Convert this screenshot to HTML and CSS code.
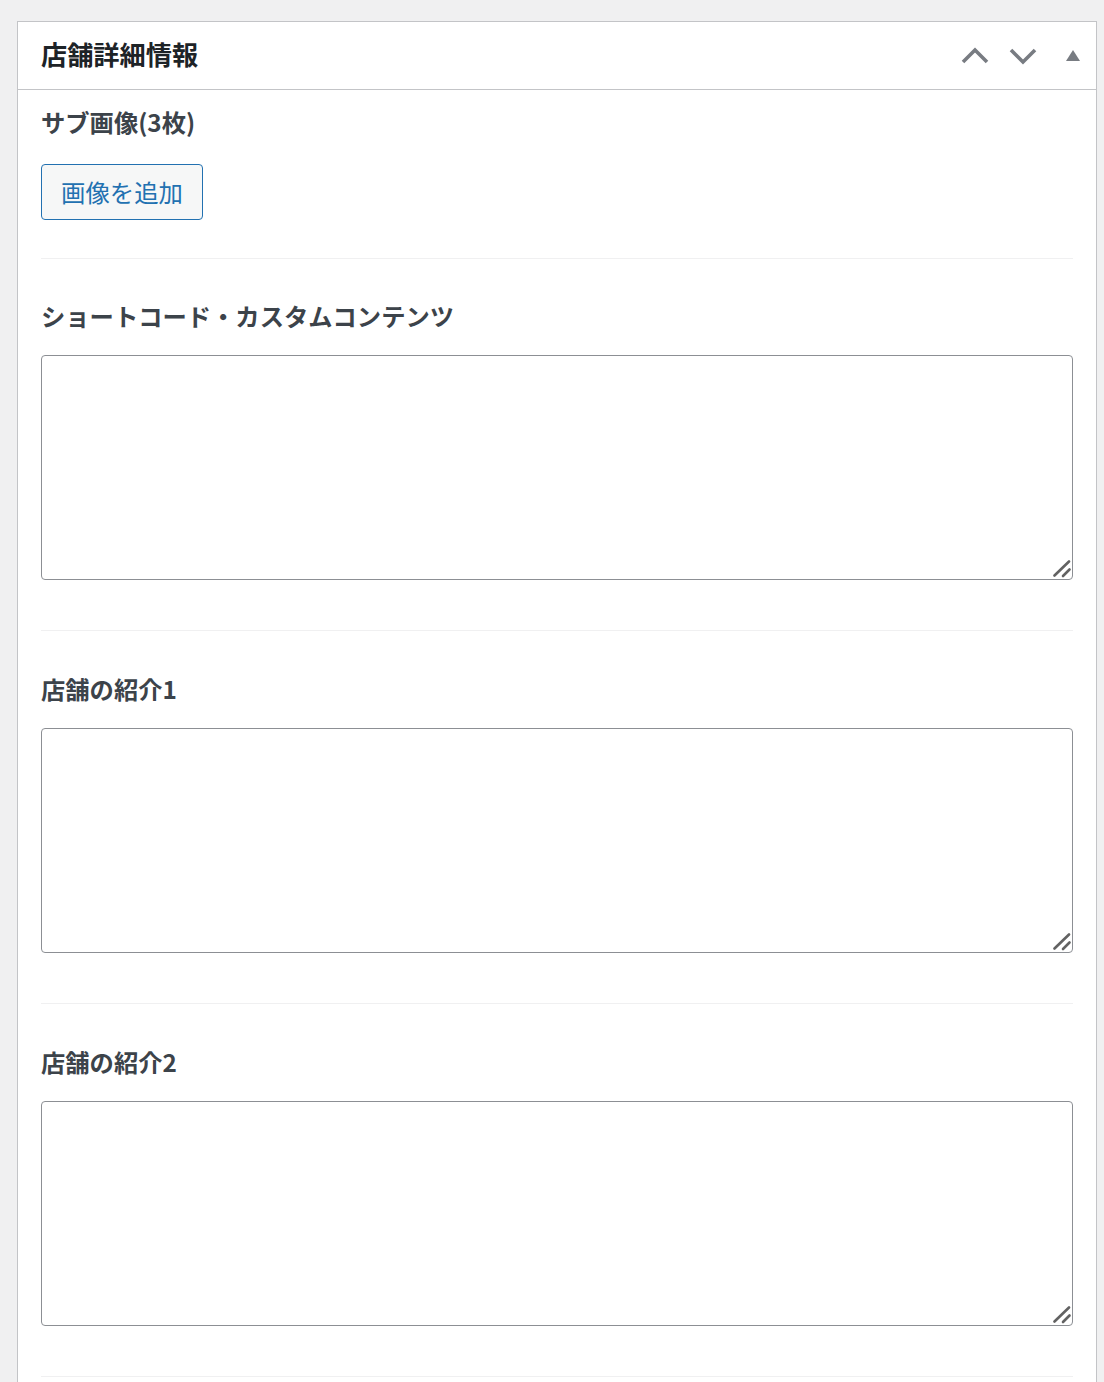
FILE: index.html
```html
<!DOCTYPE html>
<html lang="ja">
<head>
<meta charset="utf-8">
<link rel="stylesheet" href="styles.css">
</head>
<body>
<div class="postbox">
  <div class="postbox-header">
    <h2 class="postbox-title">店舗詳細情報</h2>
    <div class="handle-actions">
      <button class="handle-btn" aria-label="上へ移動">
        <svg width="28" height="20" viewBox="0 0 28 20"><polyline points="2,16 14,4 26,16" fill="none" stroke="#787c82" stroke-width="3.6"/></svg>
      </button>
      <button class="handle-btn" aria-label="下へ移動">
        <svg width="28" height="20" viewBox="0 0 28 20"><polyline points="2,4 14,16 26,4" fill="none" stroke="#787c82" stroke-width="3.6"/></svg>
      </button>
      <button class="handle-btn toggle" aria-label="パネルを閉じる">
        <svg width="16" height="14" viewBox="0 0 16 14"><polygon points="1,12 8,1 15,12" fill="#787c82"/></svg>
      </button>
    </div>
  </div>
  <div class="inside">
    <div class="field field-first">
      <div class="field-label">サブ画像(3枚)</div>
      <button class="add-btn">画像を追加</button>
    </div>
    <div class="field">
      <div class="field-label">ショートコード・カスタムコンテンツ</div>
      <div class="text-wrap">
        <textarea class="field-text"></textarea>
        <svg class="grip" width="20" height="20" viewBox="0 0 20 20"><line x1="1.5" y1="15.5" x2="16" y2="1.5" stroke="#626262" stroke-width="2.6" stroke-linecap="round"/><line x1="10" y1="16" x2="16.5" y2="9.5" stroke="#626262" stroke-width="2.6" stroke-linecap="round"/></svg>
      </div>
    </div>
    <div class="field">
      <div class="field-label">店舗の紹介1</div>
      <div class="text-wrap">
        <textarea class="field-text"></textarea>
        <svg class="grip" width="20" height="20" viewBox="0 0 20 20"><line x1="1.5" y1="15.5" x2="16" y2="1.5" stroke="#626262" stroke-width="2.6" stroke-linecap="round"/><line x1="10" y1="16" x2="16.5" y2="9.5" stroke="#626262" stroke-width="2.6" stroke-linecap="round"/></svg>
      </div>
    </div>
    <div class="field">
      <div class="field-label">店舗の紹介2</div>
      <div class="text-wrap">
        <textarea class="field-text"></textarea>
        <svg class="grip" width="20" height="20" viewBox="0 0 20 20"><line x1="1.5" y1="15.5" x2="16" y2="1.5" stroke="#626262" stroke-width="2.6" stroke-linecap="round"/><line x1="10" y1="16" x2="16.5" y2="9.5" stroke="#626262" stroke-width="2.6" stroke-linecap="round"/></svg>
      </div>
    </div>
  </div>
</div>
</body>
</html>
```
FILE: styles.css
```css
html, body {
  margin: 0;
  padding: 0;
  background: #f0f0f1;
}
body {
  font-family: "Noto Sans CJK JP", "Noto Sans", sans-serif;
  padding: 21px 0 0 17px;
  height: 1382px;
  overflow: hidden;
  box-sizing: border-box;
}
.postbox {
  width: 1080px;
  background: #fff;
  border: 1px solid #c3c4c7;
  box-sizing: border-box;
}
.postbox-header {
  height: 68px;
  border-bottom: 1px solid #c3c4c7;
  box-sizing: border-box;
  display: flex;
  align-items: center;
  justify-content: space-between;
  padding: 0 11px 0 23px;
}
.postbox-title {
  margin: 0 0 4px;
  font-size: 26.2px;
  font-weight: 700;
  line-height: 34px;
  color: #1d2327;
}
.handle-actions {
  display: flex;
  align-items: center;
}
.handle-btn {
  background: none;
  border: 0;
  padding: 0;
  margin: 0;
  width: 48px;
  height: 48px;
  display: flex;
  align-items: center;
  justify-content: center;
}
.handle-btn.toggle {
  width: 24px;
  margin-left: 14px;
}
.inside {
  padding: 0 23px 40px;
}
.field {
  padding: 43px 0 50px;
  border-bottom: 1px solid #f0f0f1;
}
.field-first {
  padding: 17px 0 38px;
}
.field-first + .field {
  padding-top: 42px;
}
.field-label {
  font-size: 24.3px;
  font-weight: 700;
  line-height: 30px;
  color: #3c434a;
  margin-bottom: 24px;
}
.field-first .field-label {
  margin-bottom: 27px;
}
.add-btn {
  display: block;
  height: 56px;
  padding: 0 19px;
  font-family: "Noto Sans CJK JP", "Noto Sans", sans-serif;
  font-size: 24.4px;
  line-height: 54px;
  color: #2271b1;
  background: #f6f7f7;
  border: 1px solid #2271b1;
  border-radius: 4px;
  box-sizing: border-box;
}
.text-wrap {
  position: relative;
}
.field-text {
  display: block;
  width: 100%;
  height: 225px;
  margin: 0;
  box-sizing: border-box;
  border: 1px solid #8c8f94;
  border-radius: 4px;
  background: #fff;
  resize: none;
  font-family: "Noto Sans CJK JP", "Noto Sans", sans-serif;
  font-size: 24px;
}
.grip {
  position: absolute;
  right: 0;
  bottom: 0;
  pointer-events: none;
}
```
